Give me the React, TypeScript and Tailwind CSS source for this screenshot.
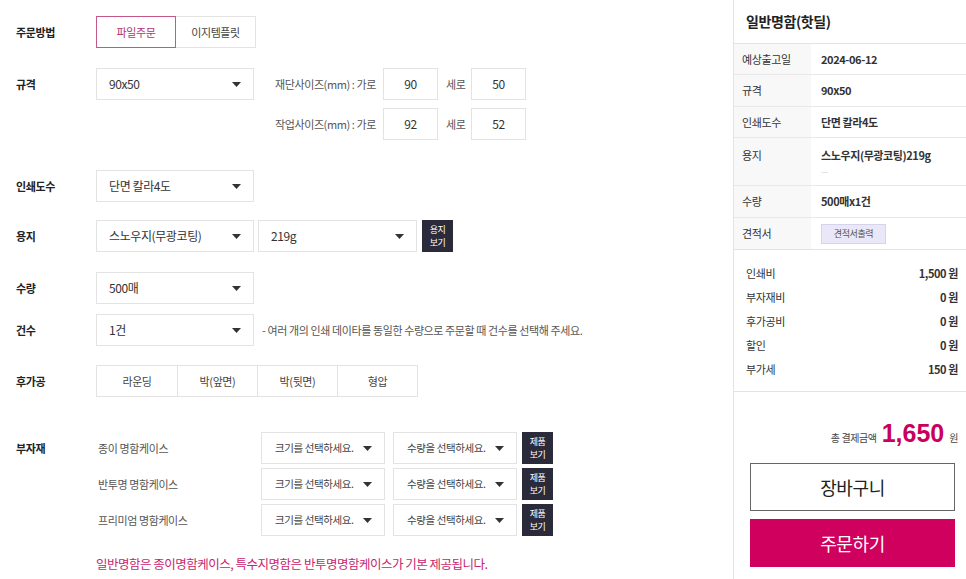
import React from "react"

const font = { fontFamily: '"Noto Sans CJK KR", "Noto Sans", sans-serif' }

function Caret() {
  return (
    <svg width="9" height="5" viewBox="0 0 9 5" className="shrink-0">
      <path d="M0 0h9L4.5 5z" fill="#333" />
    </svg>
  )
}

function Select({ value, w, small }: { value: string; w: string; small?: boolean }) {
  return (
    <div className={`${w} h-8 border border-[#e3e3e3] bg-white flex items-center justify-between pr-3 ${small ? "pl-[13px] text-[10.5px] text-[#444]" : "pl-3 text-[12px] text-[#333]"}`}>
      <span className="whitespace-nowrap">{value}</span>
      <Caret />
    </div>
  )
}

function DarkBtn({ top, bottom }: { top: string; bottom: string }) {
  return (
    <div className="w-[31px] h-8 bg-[#2b2a3a] text-white text-[9px] leading-[13px] tracking-[-0.6px] flex flex-col items-center justify-center">
      <span className="block">{top}</span>
      <span className="block">{bottom}</span>
    </div>
  )
}

function Label({ children }: { children: React.ReactNode }) {
  return <div className="w-20 shrink-0 h-8 flex items-center text-[11px] font-bold text-[#222]">{children}</div>
}

function SizeInput({ value }: { value: string }) {
  return (
    <div className="w-[55px] h-8 border border-[#e3e3e3] flex items-center justify-center text-[12px] text-[#333]">{value}</div>
  )
}

const summary = [
  { k: "예상출고일", v: "2024-06-12", h: "h-[31px]" },
  { k: "규격", v: "90x50", h: "h-8" },
  { k: "인쇄도수", v: "단면 칼라4도", h: "h-[31px]" },
]

const prices = [
  ["인쇄비", "1,500 원"],
  ["부자재비", "0 원"],
  ["후가공비", "0 원"],
  ["할인", "0 원"],
  ["부가세", "150 원"],
]

const extras = ["종이 명함케이스", "반투명 명함케이스", "프리미엄 명함케이스"]

export default function App() {
  return (
    <div style={font} className="w-[966px] h-[579px] bg-white flex overflow-hidden text-[#333] tracking-[-0.4px]">
      <main className="flex-1 pl-4 pt-4 flex flex-col">
        <div className="flex">
          <Label>주문방법</Label>
          <div className="flex">
            <div className="w-20 h-8 border border-[#c4578a] flex items-center justify-center text-[11px] text-[#b4326e]">파일주문</div>
            <div className="w-20 h-8 border border-l-0 border-[#e3e3e3] flex items-center justify-center text-[11px] text-[#444]">이지템플릿</div>
          </div>
        </div>

        <div className="flex mt-5">
          <Label>규격</Label>
          <Select value="90x50" w="w-[158px]" />
          <div className="ml-[21px] flex flex-col gap-2">
            <div className="flex items-center">
              <span className="w-[108px] text-[11px] text-[#555]">재단사이즈(mm) : 가로</span>
              <SizeInput value="90" />
              <span className="w-[33px] pl-2 text-[11px] text-[#555]">세로</span>
              <SizeInput value="50" />
            </div>
            <div className="flex items-center">
              <span className="w-[108px] text-[11px] text-[#555]">작업사이즈(mm) : 가로</span>
              <SizeInput value="92" />
              <span className="w-[33px] pl-2 text-[11px] text-[#555]">세로</span>
              <SizeInput value="52" />
            </div>
          </div>
        </div>

        <div className="flex mt-[30px]">
          <Label>인쇄도수</Label>
          <Select value="단면 칼라4도" w="w-[158px]" />
        </div>

        <div className="flex mt-[18px]">
          <Label>용지</Label>
          <Select value="스노우지(무광코팅)" w="w-[158px]" />
          <div className="ml-1">
            <Select value="219g" w="w-[159px]" />
          </div>
          <div className="ml-[5px]">
            <DarkBtn top="용지" bottom="보기" />
          </div>
        </div>

        <div className="flex mt-5">
          <Label>수량</Label>
          <Select value="500매" w="w-[158px]" />
        </div>

        <div className="flex mt-[10px] items-center">
          <Label>건수</Label>
          <Select value="1건" w="w-[158px]" />
          <span className="ml-2 text-[11px] text-[#555]">- 여러 개의 인쇄 데이타를 동일한 수량으로 주문할 때 건수를 선택해 주세요.</span>
        </div>

        <div className="flex mt-[19px]">
          <Label>후가공</Label>
          <div className="flex border border-[#e3e3e3] h-8">
            {["라운딩", "박(앞면)", "박(뒷면)", "형압"].map((t, i) => (
              <div key={t} className={`w-20 flex items-center justify-center text-[11px] text-[#444] ${i > 0 ? "border-l border-[#e3e3e3]" : ""}`}>{t}</div>
            ))}
          </div>
        </div>

        <div className="flex mt-[35px]">
          <Label>부자재</Label>
          <div className="flex flex-col gap-1">
            {extras.map((name) => (
              <div key={name} className="flex items-center">
                <span className="w-[165px] pl-[2px] text-[11px] text-[#555]">{name}</span>
                <Select value="크기를 선택하세요." w="w-[124px]" small />
                <div className="ml-2">
                  <Select value="수량을 선택하세요." w="w-[124px]" small />
                </div>
                <div className="ml-[5px]">
                  <DarkBtn top="제품" bottom="보기" />
                </div>
              </div>
            ))}
          </div>
        </div>

        <p className="mt-[19px] ml-20 text-[12.5px] tracking-[-0.5px] text-[#c8246e]">일반명함은 종이명함케이스, 특수지명함은 반투명명함케이스가 기본 제공됩니다.</p>
      </main>

      <aside className="w-[233px] shrink-0 border-l border-[#e3e3e3] flex flex-col">
        <div className="h-[44px] border-b border-[#e3e3e3] flex items-center px-[12px] text-[14px] font-semibold text-[#222]">일반명함(핫딜)</div>

        {summary.map((r) => (
          <div key={r.k} className={`flex ${r.h} border-b border-[#e8e8e8]`}>
            <div className="w-[77px] bg-[#f8f8f8] px-2 flex items-center text-[11px] text-[#333]">{r.k}</div>
            <div className="pl-[10px] flex items-center text-[11px] font-semibold text-[#333]">{r.v}</div>
          </div>
        ))}
        <div className="flex h-12 border-b border-[#e8e8e8]">
          <div className="w-[77px] bg-[#f8f8f8] px-2 pt-[9px] text-[11px] text-[#333]">용지</div>
          <div className="pl-[10px] pt-[9px] flex flex-col text-[11px] font-semibold text-[#333]">
            <span>스노우지(무광코팅)219g</span>
            <span className="text-[8px] text-[#ccc] font-normal mt-[2px]">—</span>
          </div>
        </div>
        <div className="flex h-8 border-b border-[#e8e8e8]">
          <div className="w-[77px] bg-[#f8f8f8] px-2 flex items-center text-[11px] text-[#333]">수량</div>
          <div className="pl-[10px] flex items-center text-[11px] font-semibold text-[#333]">500매x1건</div>
        </div>
        <div className="flex h-8 border-b border-[#e3e3e3]">
          <div className="w-[77px] bg-[#f8f8f8] px-2 flex items-center text-[11px] text-[#333]">견적서</div>
          <div className="pl-[10px] flex items-center">
            <span className="w-[65px] h-[20px] bg-[#e9e7f8] border border-[#d6d3ec] flex items-center justify-center text-[9px] text-[#555]">견적서출력</span>
          </div>
        </div>

        <div className="flex flex-col gap-[9px] pt-[16px] pb-[14px] pl-[12px] pr-[8px] border-b border-[#e3e3e3]">
          {prices.map(([k, v]) => (
            <div key={k} className="flex justify-between items-center h-[15px] text-[11px]">
              <span className="text-[#333]">{k}</span>
              <span className="font-semibold text-[#333]">{v}</span>
            </div>
          ))}
        </div>

        <div className="flex items-baseline justify-end pr-[8px] mt-[29px] gap-[5px]">
          <span className="text-[10px] text-[#444]">총 결제금액</span>
          <span className="text-[25px] font-bold leading-none tracking-normal text-[#c8005e]" style={{ fontFamily: '"Liberation Sans", Arial, sans-serif' }}>1,650</span>
          <span className="text-[10px] text-[#444]">원</span>
        </div>

        <div className="ml-4 mt-[17px] w-[205px] h-12 border border-[#666] flex items-center justify-center text-[18px] text-[#222]">장바구니</div>
        <div className="ml-4 mt-2 w-[205px] h-12 bg-[#d0005f] flex items-center justify-center text-[18px] text-white">주문하기</div>
      </aside>
    </div>
  )
}
